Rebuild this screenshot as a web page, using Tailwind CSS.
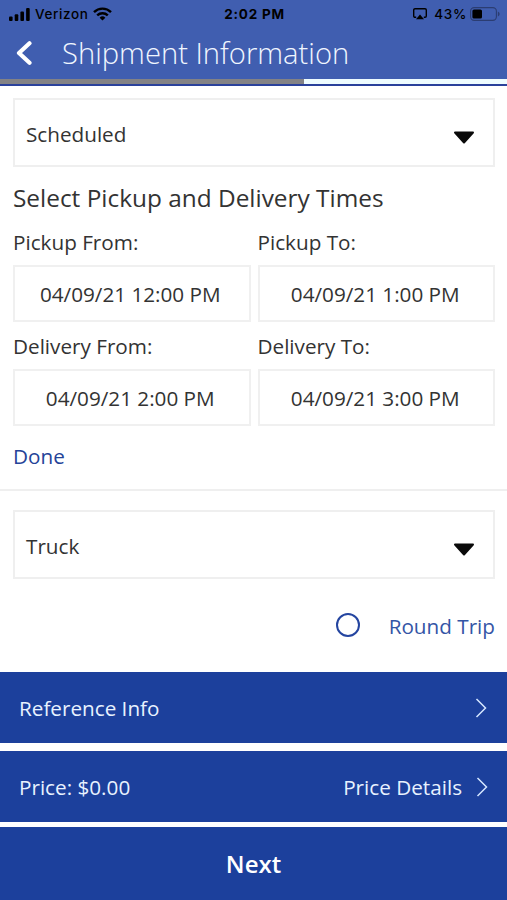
<!DOCTYPE html>
<html lang="en">
<head>
  <meta charset="UTF-8" />
  <meta name="viewport" content="width=device-width, initial-scale=1.0"/>
  <title>Shipment Information</title>
  <script src="https://cdn.jsdelivr.net/npm/@tailwindcss/browser@4"></script>
</head>
<body class="bg-white">
  <div class="w-[507px] h-[900px] flex flex-col overflow-hidden font-['Open_Sans','Noto_Sans',sans-serif] text-[20.7px] leading-7 text-[#333333]">

    <!-- Header -->
    <header class="bg-[#405eb0] h-[79px] shrink-0">
      <div class="h-7 pl-[9px] pr-[7px] grid grid-cols-[1fr_auto_1fr] items-center font-['Inter',sans-serif] text-[13.5px] leading-7 font-medium text-black">
        <div class="flex items-center">
          <svg class="w-[21px] h-[13px] mr-[5px]" viewBox="0 0 21 13" fill="currentColor">
            <rect x="0" y="8.5" width="3.6" height="4.5" rx="1"/>
            <rect x="5.7" y="6.3" width="3.6" height="6.7" rx="1"/>
            <rect x="11.4" y="3.4" width="3.6" height="9.6" rx="1"/>
            <rect x="17.1" y="0" width="3.6" height="13" rx="1"/>
          </svg>
          <span class="tracking-[0.6px]">Verizon</span>
          <svg class="w-[19px] h-[14px] ml-[5px]" viewBox="0 0 19 14" fill="none" stroke="currentColor" stroke-width="2.4">
            <path d="M1 5.1a12.2 12.2 0 0 1 17 0"/>
            <path d="M4.2 8.4a7.6 7.6 0 0 1 10.6 0"/>
            <path d="M9.5 13.6 6.6 10.7a4.2 4.2 0 0 1 5.8 0z" fill="currentColor" stroke="none"/>
          </svg>
        </div>
        <span class="text-center font-bold tracking-[0.8px]">2:02 PM</span>
        <div class="flex items-center justify-end">
          <svg class="w-[14px] h-3 mr-[7px]" viewBox="0 0 14 12" fill="none" stroke="currentColor" stroke-width="1.4">
            <path d="M3.2 9.3H2A1.3 1.3 0 0 1 .7 8V2A1.3 1.3 0 0 1 2 .7h10A1.3 1.3 0 0 1 13.3 2v6A1.3 1.3 0 0 1 12 9.3h-1.2"/>
            <path d="M7 6.5 11 11.3H3z" fill="currentColor" stroke="none"/>
          </svg>
          <span class="tracking-[0.7px]">43%</span>
          <svg class="w-[30px] h-[14px] ml-[3px]" viewBox="0 0 30 14">
            <rect x=".6" y=".6" width="25.8" height="12.8" rx="3.6" fill="none" stroke="#2b3d72" stroke-width="1.1"/>
            <rect x="2.4" y="2.4" width="9.6" height="9.2" rx="1.6" fill="#000"/>
            <path d="M27.9 4.6v4.8c1-.4 1.7-1.3 1.7-2.4s-.7-2-1.7-2.4z" fill="#2b3d72"/>
          </svg>
        </div>
      </div>
      <div class="flex items-center h-[50px] pl-4">
        <svg class="w-4 h-6" viewBox="0 0 16 24" fill="none" stroke="#fff" stroke-width="4.2" stroke-linecap="round" stroke-linejoin="round">
          <path d="M13.5 2.300 3 12l10.500 9.700"/>
        </svg>
        <h1 class="ml-[30px] text-[29.2px] leading-[50px] font-light text-[#f0f6ff] whitespace-nowrap">Shipment Information</h1>
      </div>
    </header>

    <!-- Progress -->
    <div class="h-[5px] shrink-0 bg-[#eefcff]">
      <div class="h-full w-[304px] bg-[#838285]"></div>
    </div>
    <div class="h-[2px] shrink-0 bg-[#2a419b]"></div>

    <!-- Pickup and delivery times -->
    <section class="h-[405px] shrink-0 pl-[13px] pr-3 pt-3 border-b-2 border-[#efefef]">
      <div class="h-[69px] border-2 border-[#efefef] pl-[11px] pr-[18px] flex items-center justify-between">
        <span class="pt-[3px]">Scheduled</span>
        <svg class="w-[22px] h-[13px] mt-[9px]" viewBox="0 0 22 13"><path d="M2 1.500h18L11 11.500z" fill="#0a0a0a" stroke="#0a0a0a" stroke-width="2" stroke-linejoin="round"/></svg>
      </div>
      <h2 class="mt-[15px] text-[24.4px] leading-8 whitespace-nowrap">Select Pickup and Delivery Times</h2>
      <div class="mt-[14px] grid grid-cols-2 gap-x-[7px] gap-y-[10px]">
        <label>Pickup From:
          <span class="mt-[9px] h-[57px] border-2 border-[#f0f0f0] pr-[3px] flex items-center justify-center">04/09/21 12:00 PM</span>
        </label>
        <label>Pickup To:
          <span class="mt-[9px] h-[57px] border-2 border-[#f0f0f0] pr-[2px] flex items-center justify-center">04/09/21 1:00 PM</span>
        </label>
        <label>Delivery From:
          <span class="mt-[9px] h-[57px] border-2 border-[#f0f0f0] pr-[3px] flex items-center justify-center">04/09/21 2:00 PM</span>
        </label>
        <label>Delivery To:
          <span class="mt-[9px] h-[57px] border-2 border-[#f0f0f0] pr-[2px] flex items-center justify-center">04/09/21 3:00 PM</span>
        </label>
      </div>
      <a class="mt-4 block text-[#254398]">Done</a>
    </section>

    <!-- Vehicle -->
    <section class="h-[181px] shrink-0 pl-[13px] pr-3 pt-[19px]">
      <div class="h-[69px] border-2 border-[#efefef] pl-[11px] pr-[18px] flex items-center justify-between">
        <span class="pt-[3px]">Truck</span>
        <svg class="w-[22px] h-[13px] mt-[9px]" viewBox="0 0 22 13"><path d="M2 1.500h18L11 11.500z" fill="#0a0a0a" stroke="#0a0a0a" stroke-width="2" stroke-linejoin="round"/></svg>
      </div>
      <div class="mt-[33px] flex items-center justify-end text-[#3455a6]">
        <span class="size-6 -mt-[2px] rounded-full border-[2.5px] border-[#2445a0]"></span>
        <span class="ml-[29px]">Round Trip</span>
      </div>
    </section>

    <!-- Bottom actions -->
    <div class="h-[71px] shrink-0 bg-[#1c409c] text-[#e8f2ff] pl-[19px] pr-5 flex items-center justify-between">
      <span>Reference Info</span>
      <svg class="w-3 h-5" viewBox="0 0 12 20" fill="none" stroke="#d5e6ff" stroke-width="1.5"><path d="M1.500 1 10.500 10l-9 9"/></svg>
    </div>
    <div class="mt-[8px] h-[71px] shrink-0 bg-[#1c409c] text-[#e8f2ff] pl-[19px] pr-[19px] flex items-center">
      <span>Price: $0.00</span>
      <span class="ml-auto">Price Details</span>
      <svg class="ml-[14px] w-3 h-5" viewBox="0 0 12 20" fill="none" stroke="#d5e6ff" stroke-width="1.5"><path d="M1.500 1 10.500 10l-9 9"/></svg>
    </div>
    <button class="mt-[5px] flex-1 bg-[#1c409c] text-white text-[24px] font-semibold">Next</button>
  </div>
</body>
</html>
